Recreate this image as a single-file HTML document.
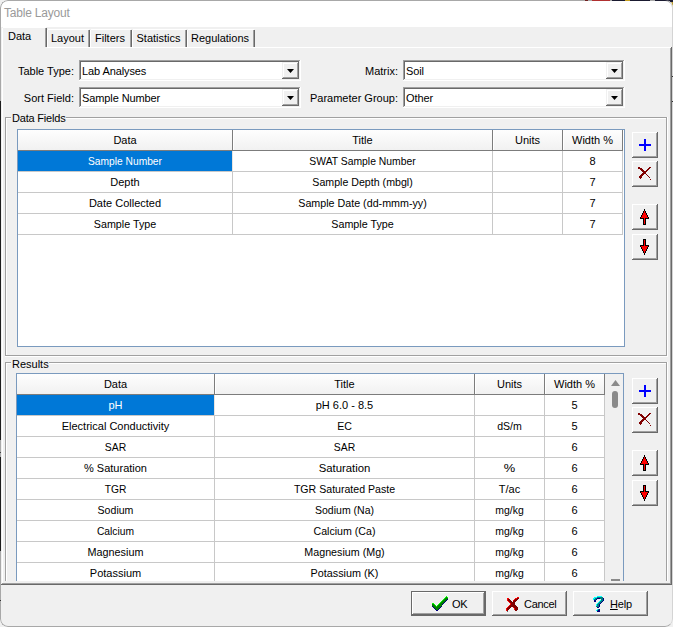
<!DOCTYPE html>
<html><head><meta charset="utf-8"><style>
html,body{margin:0;padding:0;}
body{width:673px;height:627px;overflow:hidden;position:relative;background:#f0f0f0;}
#w{position:absolute;left:0;top:0;width:673px;height:627px;border-radius:8px;background:#f0f0f0;overflow:hidden}
#bd{position:absolute;left:0;top:0;width:673px;height:627px;box-sizing:border-box;border:1px solid #a8a8a8;border-right-color:#d4d4d4;border-radius:8px}
#w div,#w span,#w svg{position:absolute;}
.t{font-family:"Liberation Sans",sans-serif;font-size:11px;line-height:13px;color:#000;white-space:nowrap}
</style></head><body><div style="position:absolute;left:645px;top:0;width:28px;height:14px;background:#1a1a30"></div><div style="position:absolute;left:668px;top:2px;width:5px;height:10px;background:#b89a30"></div><div id="w">
<div style="left:1px;top:1px;width:671px;height:26px;background:#ffffff"></div>
<span class="t" style="left:4px;top:7px;font-size:12px;color:#9a9a9a;letter-spacing:-0.2px">Table Layout</span>
<div style="left:47px;top:29px;width:43px;height:18px;background:#f0f0f0"></div>
<div style="left:48px;top:29px;width:41px;height:1px;background:#ffffff"></div>
<div style="left:47px;top:30px;width:1px;height:17px;background:#ffffff"></div>
<div style="left:89px;top:30px;width:1px;height:17px;background:#696969"></div>
<div style="left:88px;top:30px;width:1px;height:17px;background:#a0a0a0"></div>
<span class="t" style="left:47px;top:32px;width:41px;text-align:center;">Layout</span>
<div style="left:90px;top:29px;width:42px;height:18px;background:#f0f0f0"></div>
<div style="left:91px;top:29px;width:40px;height:1px;background:#ffffff"></div>
<div style="left:90px;top:30px;width:1px;height:17px;background:#ffffff"></div>
<div style="left:131px;top:30px;width:1px;height:17px;background:#696969"></div>
<div style="left:130px;top:30px;width:1px;height:17px;background:#a0a0a0"></div>
<span class="t" style="left:90px;top:32px;width:40px;text-align:center;">Filters</span>
<div style="left:132px;top:29px;width:55px;height:18px;background:#f0f0f0"></div>
<div style="left:133px;top:29px;width:53px;height:1px;background:#ffffff"></div>
<div style="left:132px;top:30px;width:1px;height:17px;background:#ffffff"></div>
<div style="left:186px;top:30px;width:1px;height:17px;background:#696969"></div>
<div style="left:185px;top:30px;width:1px;height:17px;background:#a0a0a0"></div>
<span class="t" style="left:132px;top:32px;width:53px;text-align:center;">Statistics</span>
<div style="left:187px;top:29px;width:68px;height:18px;background:#f0f0f0"></div>
<div style="left:188px;top:29px;width:66px;height:1px;background:#ffffff"></div>
<div style="left:187px;top:30px;width:1px;height:17px;background:#ffffff"></div>
<div style="left:254px;top:30px;width:1px;height:17px;background:#696969"></div>
<div style="left:253px;top:30px;width:1px;height:17px;background:#a0a0a0"></div>
<span class="t" style="left:187px;top:32px;width:66px;text-align:center;">Regulations</span>
<div style="left:2px;top:47px;width:669px;height:1px;background:#ffffff"></div>
<div style="left:2px;top:47px;width:1px;height:537px;background:#ffffff"></div>
<div style="left:671px;top:47px;width:1px;height:538px;background:#696969"></div>
<div style="left:670px;top:48px;width:1px;height:536px;background:#a0a0a0"></div>
<div style="left:2px;top:584px;width:670px;height:1px;background:#696969"></div>
<div style="left:3px;top:583px;width:668px;height:1px;background:#a0a0a0"></div>
<div style="left:2px;top:27px;width:45px;height:21px;background:#f0f0f0"></div>
<div style="left:3px;top:27px;width:43px;height:1px;background:#ffffff"></div>
<div style="left:2px;top:28px;width:1px;height:20px;background:#ffffff"></div>
<div style="left:46px;top:28px;width:1px;height:19px;background:#696969"></div>
<div style="left:45px;top:28px;width:1px;height:19px;background:#a0a0a0"></div>
<span class="t" style="left:8px;top:30px;">Data</span>
<div style="left:79px;top:60px;width:222px;height:21px;background:#fff"></div>
<div style="left:79px;top:60px;width:222px;height:1px;background:#a0a0a0"></div>
<div style="left:79px;top:60px;width:1px;height:21px;background:#a0a0a0"></div>
<div style="left:80px;top:61px;width:220px;height:1px;background:#696969"></div>
<div style="left:80px;top:61px;width:1px;height:19px;background:#696969"></div>
<div style="left:79px;top:80px;width:222px;height:1px;background:#ffffff"></div>
<div style="left:300px;top:60px;width:1px;height:21px;background:#ffffff"></div>
<div style="left:80px;top:79px;width:220px;height:1px;background:#f0f0f0"></div>
<div style="left:299px;top:61px;width:1px;height:19px;background:#f0f0f0"></div>
<div style="left:282px;top:62px;width:17px;height:17px;background:#f0f0f0"></div>
<div style="left:282px;top:62px;width:17px;height:1px;background:#f0f0f0"></div>
<div style="left:282px;top:62px;width:1px;height:17px;background:#f0f0f0"></div>
<div style="left:283px;top:63px;width:15px;height:1px;background:#ffffff"></div>
<div style="left:283px;top:63px;width:1px;height:15px;background:#ffffff"></div>
<div style="left:282px;top:78px;width:17px;height:1px;background:#696969"></div>
<div style="left:298px;top:62px;width:1px;height:17px;background:#696969"></div>
<div style="left:283px;top:77px;width:15px;height:1px;background:#a0a0a0"></div>
<div style="left:297px;top:63px;width:1px;height:15px;background:#a0a0a0"></div>
<svg style="left:287px;top:69px" width="7" height="4"><path d="M0 0H7L3.5 4Z" fill="#000"/></svg>
<span class="t" style="left:82px;top:65px;letter-spacing:-0.1px">Lab Analyses</span>
<div style="left:79px;top:87px;width:222px;height:21px;background:#fff"></div>
<div style="left:79px;top:87px;width:222px;height:1px;background:#a0a0a0"></div>
<div style="left:79px;top:87px;width:1px;height:21px;background:#a0a0a0"></div>
<div style="left:80px;top:88px;width:220px;height:1px;background:#696969"></div>
<div style="left:80px;top:88px;width:1px;height:19px;background:#696969"></div>
<div style="left:79px;top:107px;width:222px;height:1px;background:#ffffff"></div>
<div style="left:300px;top:87px;width:1px;height:21px;background:#ffffff"></div>
<div style="left:80px;top:106px;width:220px;height:1px;background:#f0f0f0"></div>
<div style="left:299px;top:88px;width:1px;height:19px;background:#f0f0f0"></div>
<div style="left:282px;top:89px;width:17px;height:17px;background:#f0f0f0"></div>
<div style="left:282px;top:89px;width:17px;height:1px;background:#f0f0f0"></div>
<div style="left:282px;top:89px;width:1px;height:17px;background:#f0f0f0"></div>
<div style="left:283px;top:90px;width:15px;height:1px;background:#ffffff"></div>
<div style="left:283px;top:90px;width:1px;height:15px;background:#ffffff"></div>
<div style="left:282px;top:105px;width:17px;height:1px;background:#696969"></div>
<div style="left:298px;top:89px;width:1px;height:17px;background:#696969"></div>
<div style="left:283px;top:104px;width:15px;height:1px;background:#a0a0a0"></div>
<div style="left:297px;top:90px;width:1px;height:15px;background:#a0a0a0"></div>
<svg style="left:287px;top:96px" width="7" height="4"><path d="M0 0H7L3.5 4Z" fill="#000"/></svg>
<span class="t" style="left:82px;top:92px;letter-spacing:-0.1px">Sample Number</span>
<div style="left:403px;top:60px;width:222px;height:21px;background:#fff"></div>
<div style="left:403px;top:60px;width:222px;height:1px;background:#a0a0a0"></div>
<div style="left:403px;top:60px;width:1px;height:21px;background:#a0a0a0"></div>
<div style="left:404px;top:61px;width:220px;height:1px;background:#696969"></div>
<div style="left:404px;top:61px;width:1px;height:19px;background:#696969"></div>
<div style="left:403px;top:80px;width:222px;height:1px;background:#ffffff"></div>
<div style="left:624px;top:60px;width:1px;height:21px;background:#ffffff"></div>
<div style="left:404px;top:79px;width:220px;height:1px;background:#f0f0f0"></div>
<div style="left:623px;top:61px;width:1px;height:19px;background:#f0f0f0"></div>
<div style="left:606px;top:62px;width:17px;height:17px;background:#f0f0f0"></div>
<div style="left:606px;top:62px;width:17px;height:1px;background:#f0f0f0"></div>
<div style="left:606px;top:62px;width:1px;height:17px;background:#f0f0f0"></div>
<div style="left:607px;top:63px;width:15px;height:1px;background:#ffffff"></div>
<div style="left:607px;top:63px;width:1px;height:15px;background:#ffffff"></div>
<div style="left:606px;top:78px;width:17px;height:1px;background:#696969"></div>
<div style="left:622px;top:62px;width:1px;height:17px;background:#696969"></div>
<div style="left:607px;top:77px;width:15px;height:1px;background:#a0a0a0"></div>
<div style="left:621px;top:63px;width:1px;height:15px;background:#a0a0a0"></div>
<svg style="left:611px;top:69px" width="7" height="4"><path d="M0 0H7L3.5 4Z" fill="#000"/></svg>
<span class="t" style="left:406px;top:65px;letter-spacing:-0.1px">Soil</span>
<div style="left:403px;top:87px;width:222px;height:21px;background:#fff"></div>
<div style="left:403px;top:87px;width:222px;height:1px;background:#a0a0a0"></div>
<div style="left:403px;top:87px;width:1px;height:21px;background:#a0a0a0"></div>
<div style="left:404px;top:88px;width:220px;height:1px;background:#696969"></div>
<div style="left:404px;top:88px;width:1px;height:19px;background:#696969"></div>
<div style="left:403px;top:107px;width:222px;height:1px;background:#ffffff"></div>
<div style="left:624px;top:87px;width:1px;height:21px;background:#ffffff"></div>
<div style="left:404px;top:106px;width:220px;height:1px;background:#f0f0f0"></div>
<div style="left:623px;top:88px;width:1px;height:19px;background:#f0f0f0"></div>
<div style="left:606px;top:89px;width:17px;height:17px;background:#f0f0f0"></div>
<div style="left:606px;top:89px;width:17px;height:1px;background:#f0f0f0"></div>
<div style="left:606px;top:89px;width:1px;height:17px;background:#f0f0f0"></div>
<div style="left:607px;top:90px;width:15px;height:1px;background:#ffffff"></div>
<div style="left:607px;top:90px;width:1px;height:15px;background:#ffffff"></div>
<div style="left:606px;top:105px;width:17px;height:1px;background:#696969"></div>
<div style="left:622px;top:89px;width:1px;height:17px;background:#696969"></div>
<div style="left:607px;top:104px;width:15px;height:1px;background:#a0a0a0"></div>
<div style="left:621px;top:90px;width:1px;height:15px;background:#a0a0a0"></div>
<svg style="left:611px;top:96px" width="7" height="4"><path d="M0 0H7L3.5 4Z" fill="#000"/></svg>
<span class="t" style="left:406px;top:92px;letter-spacing:-0.1px">Other</span>
<span class="t" style="left:0;top:65px;width:74px;text-align:right">Table Type:</span>
<span class="t" style="left:0;top:92px;width:74px;text-align:right">Sort Field:</span>
<span class="t" style="left:300px;top:65px;width:98px;text-align:right">Matrix:</span>
<span class="t" style="left:300px;top:92px;width:98px;text-align:right">Parameter Group:</span>
<div style="left:5px;top:117px;width:662px;height:1px;background:#a0a0a0"></div>
<div style="left:6px;top:118px;width:660px;height:1px;background:#ffffff"></div>
<div style="left:5px;top:117px;width:1px;height:239px;background:#a0a0a0"></div>
<div style="left:6px;top:118px;width:1px;height:237px;background:#ffffff"></div>
<div style="left:666px;top:117px;width:1px;height:239px;background:#a0a0a0"></div>
<div style="left:667px;top:117px;width:1px;height:240px;background:#ffffff"></div>
<div style="left:5px;top:355px;width:662px;height:1px;background:#a0a0a0"></div>
<div style="left:5px;top:356px;width:663px;height:1px;background:#ffffff"></div>
<div style="left:11px;top:112px;width:55px;height:13px;background:#f0f0f0"></div>
<span class="t" style="left:12px;top:112px;letter-spacing:-0.2px">Data Fields</span>
<div style="left:17px;top:129px;width:608px;height:218px;background:#ffffff"></div>
<div style="left:18px;top:130px;width:605px;height:20px;background:linear-gradient(#fefefe,#f1f1f1)"></div>
<div style="left:18px;top:150px;width:605px;height:1px;background:#7c7c7c"></div>
<div style="left:232px;top:130px;width:1px;height:20px;background:#7c7c7c"></div>
<div style="left:233px;top:130px;width:1px;height:20px;background:#ffffff"></div>
<span class="t" style="left:18px;top:134px;width:214px;text-align:center;">Data</span>
<div style="left:492px;top:130px;width:1px;height:20px;background:#7c7c7c"></div>
<div style="left:493px;top:130px;width:1px;height:20px;background:#ffffff"></div>
<span class="t" style="left:233px;top:134px;width:259px;text-align:center;">Title</span>
<div style="left:562px;top:130px;width:1px;height:20px;background:#7c7c7c"></div>
<div style="left:563px;top:130px;width:1px;height:20px;background:#ffffff"></div>
<span class="t" style="left:493px;top:134px;width:69px;text-align:center;">Units</span>
<div style="left:622px;top:130px;width:1px;height:20px;background:#7c7c7c"></div>
<span class="t" style="left:563px;top:134px;width:59px;text-align:center;">Width %</span>
<div style="left:18px;top:151px;width:214px;height:20px;background:#0078d7"></div>
<span class="t" style="left:18px;top:155px;width:214px;text-align:center;color:#fff;transform:scaleX(0.930);">Sample Number</span>
<div style="left:232px;top:151px;width:1px;height:20px;background:#e8e4e0"></div>
<span class="t" style="left:233px;top:155px;width:259px;text-align:center;;transform:scaleX(0.942);">SWAT Sample Number</span>
<div style="left:492px;top:151px;width:1px;height:20px;background:#c8c8c8"></div>
<span class="t" style="left:493px;top:155px;width:69px;text-align:center;"></span>
<div style="left:562px;top:151px;width:1px;height:20px;background:#c8c8c8"></div>
<span class="t" style="left:563px;top:155px;width:59px;text-align:center;">8</span>
<div style="left:622px;top:151px;width:1px;height:20px;background:#c8c8c8"></div>
<div style="left:18px;top:171px;width:605px;height:1px;background:#c8c8c8"></div>
<span class="t" style="left:18px;top:176px;width:214px;text-align:center;">Depth</span>
<div style="left:232px;top:172px;width:1px;height:20px;background:#c8c8c8"></div>
<span class="t" style="left:233px;top:176px;width:259px;text-align:center;;transform:scaleX(0.966);">Sample Depth (mbgl)</span>
<div style="left:492px;top:172px;width:1px;height:20px;background:#c8c8c8"></div>
<span class="t" style="left:493px;top:176px;width:69px;text-align:center;"></span>
<div style="left:562px;top:172px;width:1px;height:20px;background:#c8c8c8"></div>
<span class="t" style="left:563px;top:176px;width:59px;text-align:center;">7</span>
<div style="left:622px;top:172px;width:1px;height:20px;background:#c8c8c8"></div>
<div style="left:18px;top:192px;width:605px;height:1px;background:#c8c8c8"></div>
<span class="t" style="left:18px;top:197px;width:214px;text-align:center;">Date Collected</span>
<div style="left:232px;top:193px;width:1px;height:20px;background:#c8c8c8"></div>
<span class="t" style="left:233px;top:197px;width:259px;text-align:center;;transform:scaleX(0.973);">Sample Date (dd-mmm-yy)</span>
<div style="left:492px;top:193px;width:1px;height:20px;background:#c8c8c8"></div>
<span class="t" style="left:493px;top:197px;width:69px;text-align:center;"></span>
<div style="left:562px;top:193px;width:1px;height:20px;background:#c8c8c8"></div>
<span class="t" style="left:563px;top:197px;width:59px;text-align:center;">7</span>
<div style="left:622px;top:193px;width:1px;height:20px;background:#c8c8c8"></div>
<div style="left:18px;top:213px;width:605px;height:1px;background:#c8c8c8"></div>
<span class="t" style="left:18px;top:218px;width:214px;text-align:center;;transform:scaleX(0.976);">Sample Type</span>
<div style="left:232px;top:214px;width:1px;height:20px;background:#c8c8c8"></div>
<span class="t" style="left:233px;top:218px;width:259px;text-align:center;;transform:scaleX(0.976);">Sample Type</span>
<div style="left:492px;top:214px;width:1px;height:20px;background:#c8c8c8"></div>
<span class="t" style="left:493px;top:218px;width:69px;text-align:center;"></span>
<div style="left:562px;top:214px;width:1px;height:20px;background:#c8c8c8"></div>
<span class="t" style="left:563px;top:218px;width:59px;text-align:center;">7</span>
<div style="left:622px;top:214px;width:1px;height:20px;background:#c8c8c8"></div>
<div style="left:18px;top:234px;width:605px;height:1px;background:#c8c8c8"></div>
<div style="left:17px;top:129px;width:608px;height:1px;background:#7a9abe"></div>
<div style="left:17px;top:129px;width:1px;height:218px;background:#7a9abe"></div>
<div style="left:624px;top:129px;width:1px;height:218px;background:#7a9abe"></div>
<div style="left:17px;top:346px;width:608px;height:1px;background:#7a9abe"></div>
<div style="left:5px;top:362px;width:662px;height:1px;background:#a0a0a0"></div>
<div style="left:6px;top:363px;width:660px;height:1px;background:#ffffff"></div>
<div style="left:5px;top:362px;width:1px;height:228px;background:#a0a0a0"></div>
<div style="left:6px;top:363px;width:1px;height:226px;background:#ffffff"></div>
<div style="left:666px;top:362px;width:1px;height:228px;background:#a0a0a0"></div>
<div style="left:667px;top:362px;width:1px;height:229px;background:#ffffff"></div>
<div style="left:5px;top:589px;width:662px;height:1px;background:#a0a0a0"></div>
<div style="left:5px;top:590px;width:663px;height:1px;background:#ffffff"></div>
<div style="left:11px;top:357px;width:38px;height:13px;background:#f0f0f0"></div>
<span class="t" style="left:12px;top:358px;">Results</span>
<div style="left:16px;top:373px;width:608px;height:228px;background:#ffffff"></div>
<div style="left:17px;top:374px;width:588px;height:20px;background:linear-gradient(#fefefe,#f1f1f1)"></div>
<div style="left:17px;top:394px;width:588px;height:1px;background:#7c7c7c"></div>
<div style="left:214px;top:374px;width:1px;height:20px;background:#7c7c7c"></div>
<div style="left:215px;top:374px;width:1px;height:20px;background:#ffffff"></div>
<span class="t" style="left:17px;top:378px;width:197px;text-align:center;">Data</span>
<div style="left:474px;top:374px;width:1px;height:20px;background:#7c7c7c"></div>
<div style="left:475px;top:374px;width:1px;height:20px;background:#ffffff"></div>
<span class="t" style="left:215px;top:378px;width:259px;text-align:center;">Title</span>
<div style="left:544px;top:374px;width:1px;height:20px;background:#7c7c7c"></div>
<div style="left:545px;top:374px;width:1px;height:20px;background:#ffffff"></div>
<span class="t" style="left:475px;top:378px;width:69px;text-align:center;">Units</span>
<div style="left:604px;top:374px;width:1px;height:20px;background:#7c7c7c"></div>
<span class="t" style="left:545px;top:378px;width:59px;text-align:center;">Width %</span>
<div style="left:17px;top:395px;width:197px;height:20px;background:#0078d7"></div>
<span class="t" style="left:17px;top:399px;width:197px;text-align:center;color:#fff">pH</span>
<div style="left:214px;top:395px;width:1px;height:20px;background:#e8e4e0"></div>
<span class="t" style="left:215px;top:399px;width:259px;text-align:center;">pH 6.0 - 8.5</span>
<div style="left:474px;top:395px;width:1px;height:20px;background:#c8c8c8"></div>
<span class="t" style="left:475px;top:399px;width:69px;text-align:center;"></span>
<div style="left:544px;top:395px;width:1px;height:20px;background:#c8c8c8"></div>
<span class="t" style="left:545px;top:399px;width:59px;text-align:center;">5</span>
<div style="left:604px;top:395px;width:1px;height:20px;background:#c8c8c8"></div>
<div style="left:17px;top:415px;width:588px;height:1px;background:#c8c8c8"></div>
<span class="t" style="left:17px;top:420px;width:197px;text-align:center;">Electrical Conductivity</span>
<div style="left:214px;top:416px;width:1px;height:20px;background:#c8c8c8"></div>
<span class="t" style="left:215px;top:420px;width:259px;text-align:center;;transform:scaleX(0.964);">EC</span>
<div style="left:474px;top:416px;width:1px;height:20px;background:#c8c8c8"></div>
<span class="t" style="left:475px;top:420px;width:69px;text-align:center;;transform:scaleX(0.960);">dS/m</span>
<div style="left:544px;top:416px;width:1px;height:20px;background:#c8c8c8"></div>
<span class="t" style="left:545px;top:420px;width:59px;text-align:center;">5</span>
<div style="left:604px;top:416px;width:1px;height:20px;background:#c8c8c8"></div>
<div style="left:17px;top:436px;width:588px;height:1px;background:#c8c8c8"></div>
<span class="t" style="left:17px;top:441px;width:197px;text-align:center;;transform:scaleX(0.943);">SAR</span>
<div style="left:214px;top:437px;width:1px;height:20px;background:#c8c8c8"></div>
<span class="t" style="left:215px;top:441px;width:259px;text-align:center;;transform:scaleX(0.943);">SAR</span>
<div style="left:474px;top:437px;width:1px;height:20px;background:#c8c8c8"></div>
<span class="t" style="left:475px;top:441px;width:69px;text-align:center;"></span>
<div style="left:544px;top:437px;width:1px;height:20px;background:#c8c8c8"></div>
<span class="t" style="left:545px;top:441px;width:59px;text-align:center;">6</span>
<div style="left:604px;top:437px;width:1px;height:20px;background:#c8c8c8"></div>
<div style="left:17px;top:457px;width:588px;height:1px;background:#c8c8c8"></div>
<span class="t" style="left:17px;top:462px;width:197px;text-align:center;">% Saturation</span>
<div style="left:214px;top:458px;width:1px;height:20px;background:#c8c8c8"></div>
<span class="t" style="left:215px;top:462px;width:259px;text-align:center;;transform:scaleX(1.031);">Saturation</span>
<div style="left:474px;top:458px;width:1px;height:20px;background:#c8c8c8"></div>
<span class="t" style="left:475px;top:462px;width:69px;text-align:center;;transform:scaleX(1.167);">%</span>
<div style="left:544px;top:458px;width:1px;height:20px;background:#c8c8c8"></div>
<span class="t" style="left:545px;top:462px;width:59px;text-align:center;">6</span>
<div style="left:604px;top:458px;width:1px;height:20px;background:#c8c8c8"></div>
<div style="left:17px;top:478px;width:588px;height:1px;background:#c8c8c8"></div>
<span class="t" style="left:17px;top:483px;width:197px;text-align:center;;transform:scaleX(0.932);">TGR</span>
<div style="left:214px;top:479px;width:1px;height:20px;background:#c8c8c8"></div>
<span class="t" style="left:215px;top:483px;width:259px;text-align:center;;transform:scaleX(0.962);">TGR Saturated Paste</span>
<div style="left:474px;top:479px;width:1px;height:20px;background:#c8c8c8"></div>
<span class="t" style="left:475px;top:483px;width:69px;text-align:center;">T/ac</span>
<div style="left:544px;top:479px;width:1px;height:20px;background:#c8c8c8"></div>
<span class="t" style="left:545px;top:483px;width:59px;text-align:center;">6</span>
<div style="left:604px;top:479px;width:1px;height:20px;background:#c8c8c8"></div>
<div style="left:17px;top:499px;width:588px;height:1px;background:#c8c8c8"></div>
<span class="t" style="left:17px;top:504px;width:197px;text-align:center;;transform:scaleX(0.961);">Sodium</span>
<div style="left:214px;top:500px;width:1px;height:20px;background:#c8c8c8"></div>
<span class="t" style="left:215px;top:504px;width:259px;text-align:center;;transform:scaleX(0.956);">Sodium (Na)</span>
<div style="left:474px;top:500px;width:1px;height:20px;background:#c8c8c8"></div>
<span class="t" style="left:475px;top:504px;width:69px;text-align:center;;transform:scaleX(0.948);">mg/kg</span>
<div style="left:544px;top:500px;width:1px;height:20px;background:#c8c8c8"></div>
<span class="t" style="left:545px;top:504px;width:59px;text-align:center;">6</span>
<div style="left:604px;top:500px;width:1px;height:20px;background:#c8c8c8"></div>
<div style="left:17px;top:520px;width:588px;height:1px;background:#c8c8c8"></div>
<span class="t" style="left:17px;top:525px;width:197px;text-align:center;;transform:scaleX(0.933);">Calcium</span>
<div style="left:214px;top:521px;width:1px;height:20px;background:#c8c8c8"></div>
<span class="t" style="left:215px;top:525px;width:259px;text-align:center;;transform:scaleX(0.965);">Calcium (Ca)</span>
<div style="left:474px;top:521px;width:1px;height:20px;background:#c8c8c8"></div>
<span class="t" style="left:475px;top:525px;width:69px;text-align:center;;transform:scaleX(0.948);">mg/kg</span>
<div style="left:544px;top:521px;width:1px;height:20px;background:#c8c8c8"></div>
<span class="t" style="left:545px;top:525px;width:59px;text-align:center;">6</span>
<div style="left:604px;top:521px;width:1px;height:20px;background:#c8c8c8"></div>
<div style="left:17px;top:541px;width:588px;height:1px;background:#c8c8c8"></div>
<span class="t" style="left:17px;top:546px;width:197px;text-align:center;;transform:scaleX(0.982);">Magnesium</span>
<div style="left:214px;top:542px;width:1px;height:20px;background:#c8c8c8"></div>
<span class="t" style="left:215px;top:546px;width:259px;text-align:center;;transform:scaleX(0.974);">Magnesium (Mg)</span>
<div style="left:474px;top:542px;width:1px;height:20px;background:#c8c8c8"></div>
<span class="t" style="left:475px;top:546px;width:69px;text-align:center;;transform:scaleX(0.948);">mg/kg</span>
<div style="left:544px;top:542px;width:1px;height:20px;background:#c8c8c8"></div>
<span class="t" style="left:545px;top:546px;width:59px;text-align:center;">6</span>
<div style="left:604px;top:542px;width:1px;height:20px;background:#c8c8c8"></div>
<div style="left:17px;top:562px;width:588px;height:1px;background:#c8c8c8"></div>
<span class="t" style="left:17px;top:567px;width:197px;text-align:center;">Potassium</span>
<div style="left:214px;top:563px;width:1px;height:20px;background:#c8c8c8"></div>
<span class="t" style="left:215px;top:567px;width:259px;text-align:center;;transform:scaleX(0.981);">Potassium (K)</span>
<div style="left:474px;top:563px;width:1px;height:20px;background:#c8c8c8"></div>
<span class="t" style="left:475px;top:567px;width:69px;text-align:center;;transform:scaleX(0.948);">mg/kg</span>
<div style="left:544px;top:563px;width:1px;height:20px;background:#c8c8c8"></div>
<span class="t" style="left:545px;top:567px;width:59px;text-align:center;">6</span>
<div style="left:604px;top:563px;width:1px;height:20px;background:#c8c8c8"></div>
<div style="left:17px;top:583px;width:588px;height:1px;background:#c8c8c8"></div>
<div style="left:16px;top:373px;width:608px;height:1px;background:#7a9abe"></div>
<div style="left:16px;top:373px;width:1px;height:228px;background:#7a9abe"></div>
<div style="left:623px;top:373px;width:1px;height:228px;background:#7a9abe"></div>
<div style="left:16px;top:600px;width:608px;height:1px;background:#7a9abe"></div>
<div style="left:605px;top:374px;width:18px;height:227px;background:#f0f0f0"></div>
<svg style="left:611px;top:380px" width="9" height="6"><path d="M4.5 0L9 6H0Z" fill="#8a8a8a"/></svg>
<div style="left:612px;top:391px;width:6px;height:17px;background:#8a8a8a;border-radius:3px"></div>
<div style="left:611px;top:579px;width:9px;height:2px;background:#8a8a8a"></div>
<div style="left:3px;top:581px;width:667px;height:2px;background:#f0f0f0"></div>
<div style="left:2px;top:583px;width:669px;height:1px;background:#a0a0a0"></div>
<div style="left:1px;top:584px;width:671px;height:1px;background:#696969"></div>
<div style="left:1px;top:585px;width:671px;height:41px;background:#f0f0f0"></div>
<div style="left:632px;top:132px;width:26px;height:26px;background:#f0f0f0"></div>
<div style="left:632px;top:132px;width:26px;height:1px;background:#ffffff"></div>
<div style="left:632px;top:132px;width:1px;height:26px;background:#ffffff"></div>
<div style="left:633px;top:133px;width:24px;height:1px;background:#f0f0f0"></div>
<div style="left:633px;top:133px;width:1px;height:24px;background:#f0f0f0"></div>
<div style="left:632px;top:157px;width:26px;height:1px;background:#696969"></div>
<div style="left:657px;top:132px;width:1px;height:26px;background:#696969"></div>
<div style="left:633px;top:156px;width:24px;height:1px;background:#a0a0a0"></div>
<div style="left:656px;top:133px;width:1px;height:24px;background:#a0a0a0"></div>
<div style="left:632px;top:161px;width:26px;height:26px;background:#f0f0f0"></div>
<div style="left:632px;top:161px;width:26px;height:1px;background:#ffffff"></div>
<div style="left:632px;top:161px;width:1px;height:26px;background:#ffffff"></div>
<div style="left:633px;top:162px;width:24px;height:1px;background:#f0f0f0"></div>
<div style="left:633px;top:162px;width:1px;height:24px;background:#f0f0f0"></div>
<div style="left:632px;top:186px;width:26px;height:1px;background:#696969"></div>
<div style="left:657px;top:161px;width:1px;height:26px;background:#696969"></div>
<div style="left:633px;top:185px;width:24px;height:1px;background:#a0a0a0"></div>
<div style="left:656px;top:162px;width:1px;height:24px;background:#a0a0a0"></div>
<div style="left:632px;top:204px;width:26px;height:26px;background:#f0f0f0"></div>
<div style="left:632px;top:204px;width:26px;height:1px;background:#ffffff"></div>
<div style="left:632px;top:204px;width:1px;height:26px;background:#ffffff"></div>
<div style="left:633px;top:205px;width:24px;height:1px;background:#f0f0f0"></div>
<div style="left:633px;top:205px;width:1px;height:24px;background:#f0f0f0"></div>
<div style="left:632px;top:229px;width:26px;height:1px;background:#696969"></div>
<div style="left:657px;top:204px;width:1px;height:26px;background:#696969"></div>
<div style="left:633px;top:228px;width:24px;height:1px;background:#a0a0a0"></div>
<div style="left:656px;top:205px;width:1px;height:24px;background:#a0a0a0"></div>
<div style="left:632px;top:234px;width:26px;height:26px;background:#f0f0f0"></div>
<div style="left:632px;top:234px;width:26px;height:1px;background:#ffffff"></div>
<div style="left:632px;top:234px;width:1px;height:26px;background:#ffffff"></div>
<div style="left:633px;top:235px;width:24px;height:1px;background:#f0f0f0"></div>
<div style="left:633px;top:235px;width:1px;height:24px;background:#f0f0f0"></div>
<div style="left:632px;top:259px;width:26px;height:1px;background:#696969"></div>
<div style="left:657px;top:234px;width:1px;height:26px;background:#696969"></div>
<div style="left:633px;top:258px;width:24px;height:1px;background:#a0a0a0"></div>
<div style="left:656px;top:235px;width:1px;height:24px;background:#a0a0a0"></div>
<div style="left:632px;top:378px;width:26px;height:26px;background:#f0f0f0"></div>
<div style="left:632px;top:378px;width:26px;height:1px;background:#ffffff"></div>
<div style="left:632px;top:378px;width:1px;height:26px;background:#ffffff"></div>
<div style="left:633px;top:379px;width:24px;height:1px;background:#f0f0f0"></div>
<div style="left:633px;top:379px;width:1px;height:24px;background:#f0f0f0"></div>
<div style="left:632px;top:403px;width:26px;height:1px;background:#696969"></div>
<div style="left:657px;top:378px;width:1px;height:26px;background:#696969"></div>
<div style="left:633px;top:402px;width:24px;height:1px;background:#a0a0a0"></div>
<div style="left:656px;top:379px;width:1px;height:24px;background:#a0a0a0"></div>
<div style="left:632px;top:407px;width:26px;height:26px;background:#f0f0f0"></div>
<div style="left:632px;top:407px;width:26px;height:1px;background:#ffffff"></div>
<div style="left:632px;top:407px;width:1px;height:26px;background:#ffffff"></div>
<div style="left:633px;top:408px;width:24px;height:1px;background:#f0f0f0"></div>
<div style="left:633px;top:408px;width:1px;height:24px;background:#f0f0f0"></div>
<div style="left:632px;top:432px;width:26px;height:1px;background:#696969"></div>
<div style="left:657px;top:407px;width:1px;height:26px;background:#696969"></div>
<div style="left:633px;top:431px;width:24px;height:1px;background:#a0a0a0"></div>
<div style="left:656px;top:408px;width:1px;height:24px;background:#a0a0a0"></div>
<div style="left:632px;top:450px;width:26px;height:26px;background:#f0f0f0"></div>
<div style="left:632px;top:450px;width:26px;height:1px;background:#ffffff"></div>
<div style="left:632px;top:450px;width:1px;height:26px;background:#ffffff"></div>
<div style="left:633px;top:451px;width:24px;height:1px;background:#f0f0f0"></div>
<div style="left:633px;top:451px;width:1px;height:24px;background:#f0f0f0"></div>
<div style="left:632px;top:475px;width:26px;height:1px;background:#696969"></div>
<div style="left:657px;top:450px;width:1px;height:26px;background:#696969"></div>
<div style="left:633px;top:474px;width:24px;height:1px;background:#a0a0a0"></div>
<div style="left:656px;top:451px;width:1px;height:24px;background:#a0a0a0"></div>
<div style="left:632px;top:480px;width:26px;height:26px;background:#f0f0f0"></div>
<div style="left:632px;top:480px;width:26px;height:1px;background:#ffffff"></div>
<div style="left:632px;top:480px;width:1px;height:26px;background:#ffffff"></div>
<div style="left:633px;top:481px;width:24px;height:1px;background:#f0f0f0"></div>
<div style="left:633px;top:481px;width:1px;height:24px;background:#f0f0f0"></div>
<div style="left:632px;top:505px;width:26px;height:1px;background:#696969"></div>
<div style="left:657px;top:480px;width:1px;height:26px;background:#696969"></div>
<div style="left:633px;top:504px;width:24px;height:1px;background:#a0a0a0"></div>
<div style="left:656px;top:481px;width:1px;height:24px;background:#a0a0a0"></div>
<svg style="left:639px;top:139px" width="12" height="12" shape-rendering="crispEdges"><rect x="5" y="0" width="2" height="1" fill="#0000ff"/><rect x="5" y="1" width="2" height="1" fill="#0000ff"/><rect x="5" y="2" width="2" height="1" fill="#0000ff"/><rect x="5" y="3" width="2" height="1" fill="#0000ff"/><rect x="5" y="4" width="2" height="1" fill="#0000ff"/><rect x="0" y="5" width="12" height="1" fill="#0000ff"/><rect x="0" y="6" width="12" height="1" fill="#0000ff"/><rect x="5" y="7" width="2" height="1" fill="#0000ff"/><rect x="5" y="8" width="2" height="1" fill="#0000ff"/><rect x="5" y="9" width="2" height="1" fill="#0000ff"/><rect x="5" y="10" width="2" height="1" fill="#0000ff"/><rect x="5" y="11" width="2" height="1" fill="#0000ff"/></svg>
<svg style="left:638px;top:167px" width="14" height="13" shape-rendering="crispEdges"><rect x="0" y="0" width="2" height="1" fill="#800000"/><rect x="11" y="0" width="2" height="1" fill="#800000"/><rect x="0" y="1" width="4" height="1" fill="#800000"/><rect x="10" y="1" width="2" height="1" fill="#800000"/><rect x="2" y="2" width="3" height="1" fill="#800000"/><rect x="9" y="2" width="2" height="1" fill="#800000"/><rect x="3" y="3" width="3" height="1" fill="#800000"/><rect x="8" y="3" width="2" height="1" fill="#800000"/><rect x="4" y="4" width="5" height="1" fill="#800000"/><rect x="5" y="5" width="3" height="1" fill="#800000"/><rect x="4" y="6" width="4" height="1" fill="#800000"/><rect x="3" y="7" width="3" height="1" fill="#800000"/><rect x="8" y="7" width="1" height="1" fill="#800000"/><rect x="2" y="8" width="3" height="1" fill="#800000"/><rect x="9" y="8" width="1" height="1" fill="#800000"/><rect x="1" y="9" width="3" height="1" fill="#800000"/><rect x="10" y="9" width="1" height="1" fill="#800000"/><rect x="1" y="10" width="3" height="1" fill="#800000"/><rect x="11" y="10" width="1" height="1" fill="#800000"/><rect x="2" y="11" width="1" height="1" fill="#800000"/><rect x="12" y="12" width="1" height="1" fill="#800000"/></svg>
<svg style="left:640px;top:209px" width="9" height="16" shape-rendering="crispEdges"><rect x="4" y="0" width="1" height="1" fill="#000000"/><rect x="4" y="1" width="1" height="1" fill="#000000"/><rect x="3" y="2" width="1" height="1" fill="#000000"/><rect x="4" y="2" width="1" height="1" fill="#ff0000"/><rect x="5" y="2" width="1" height="1" fill="#000000"/><rect x="3" y="3" width="1" height="1" fill="#000000"/><rect x="4" y="3" width="1" height="1" fill="#ff0000"/><rect x="5" y="3" width="1" height="1" fill="#000000"/><rect x="2" y="4" width="1" height="1" fill="#000000"/><rect x="3" y="4" width="3" height="1" fill="#ff0000"/><rect x="6" y="4" width="1" height="1" fill="#000000"/><rect x="2" y="5" width="1" height="1" fill="#000000"/><rect x="3" y="5" width="3" height="1" fill="#ff0000"/><rect x="6" y="5" width="1" height="1" fill="#000000"/><rect x="1" y="6" width="1" height="1" fill="#000000"/><rect x="2" y="6" width="5" height="1" fill="#ff0000"/><rect x="7" y="6" width="1" height="1" fill="#000000"/><rect x="1" y="7" width="1" height="1" fill="#000000"/><rect x="2" y="7" width="5" height="1" fill="#ff0000"/><rect x="7" y="7" width="1" height="1" fill="#000000"/><rect x="0" y="8" width="1" height="1" fill="#000000"/><rect x="1" y="8" width="7" height="1" fill="#ff0000"/><rect x="8" y="8" width="1" height="1" fill="#000000"/><rect x="0" y="9" width="4" height="1" fill="#000000"/><rect x="4" y="9" width="1" height="1" fill="#ff0000"/><rect x="5" y="9" width="4" height="1" fill="#000000"/><rect x="3" y="10" width="1" height="1" fill="#000000"/><rect x="4" y="10" width="1" height="1" fill="#ff0000"/><rect x="5" y="10" width="1" height="1" fill="#000000"/><rect x="3" y="11" width="1" height="1" fill="#000000"/><rect x="4" y="11" width="1" height="1" fill="#ff0000"/><rect x="5" y="11" width="1" height="1" fill="#000000"/><rect x="3" y="12" width="1" height="1" fill="#000000"/><rect x="4" y="12" width="1" height="1" fill="#ff0000"/><rect x="5" y="12" width="1" height="1" fill="#000000"/><rect x="3" y="13" width="1" height="1" fill="#000000"/><rect x="4" y="13" width="1" height="1" fill="#ff0000"/><rect x="5" y="13" width="1" height="1" fill="#000000"/><rect x="3" y="14" width="1" height="1" fill="#000000"/><rect x="4" y="14" width="1" height="1" fill="#ff0000"/><rect x="5" y="14" width="1" height="1" fill="#000000"/><rect x="3" y="15" width="3" height="1" fill="#000000"/></svg>
<svg style="left:640px;top:239px" width="9" height="16" shape-rendering="crispEdges"><rect x="3" y="0" width="3" height="1" fill="#000000"/><rect x="3" y="1" width="1" height="1" fill="#000000"/><rect x="4" y="1" width="1" height="1" fill="#ff0000"/><rect x="5" y="1" width="1" height="1" fill="#000000"/><rect x="3" y="2" width="1" height="1" fill="#000000"/><rect x="4" y="2" width="1" height="1" fill="#ff0000"/><rect x="5" y="2" width="1" height="1" fill="#000000"/><rect x="3" y="3" width="1" height="1" fill="#000000"/><rect x="4" y="3" width="1" height="1" fill="#ff0000"/><rect x="5" y="3" width="1" height="1" fill="#000000"/><rect x="3" y="4" width="1" height="1" fill="#000000"/><rect x="4" y="4" width="1" height="1" fill="#ff0000"/><rect x="5" y="4" width="1" height="1" fill="#000000"/><rect x="3" y="5" width="1" height="1" fill="#000000"/><rect x="4" y="5" width="1" height="1" fill="#ff0000"/><rect x="5" y="5" width="1" height="1" fill="#000000"/><rect x="0" y="6" width="4" height="1" fill="#000000"/><rect x="4" y="6" width="1" height="1" fill="#ff0000"/><rect x="5" y="6" width="4" height="1" fill="#000000"/><rect x="0" y="7" width="1" height="1" fill="#000000"/><rect x="1" y="7" width="7" height="1" fill="#ff0000"/><rect x="8" y="7" width="1" height="1" fill="#000000"/><rect x="1" y="8" width="1" height="1" fill="#000000"/><rect x="2" y="8" width="5" height="1" fill="#ff0000"/><rect x="7" y="8" width="1" height="1" fill="#000000"/><rect x="1" y="9" width="1" height="1" fill="#000000"/><rect x="2" y="9" width="5" height="1" fill="#ff0000"/><rect x="7" y="9" width="1" height="1" fill="#000000"/><rect x="2" y="10" width="1" height="1" fill="#000000"/><rect x="3" y="10" width="3" height="1" fill="#ff0000"/><rect x="6" y="10" width="1" height="1" fill="#000000"/><rect x="2" y="11" width="1" height="1" fill="#000000"/><rect x="3" y="11" width="3" height="1" fill="#ff0000"/><rect x="6" y="11" width="1" height="1" fill="#000000"/><rect x="3" y="12" width="1" height="1" fill="#000000"/><rect x="4" y="12" width="1" height="1" fill="#ff0000"/><rect x="5" y="12" width="1" height="1" fill="#000000"/><rect x="3" y="13" width="1" height="1" fill="#000000"/><rect x="4" y="13" width="1" height="1" fill="#ff0000"/><rect x="5" y="13" width="1" height="1" fill="#000000"/><rect x="4" y="14" width="1" height="1" fill="#000000"/><rect x="4" y="15" width="1" height="1" fill="#000000"/></svg>
<svg style="left:639px;top:385px" width="12" height="12" shape-rendering="crispEdges"><rect x="5" y="0" width="2" height="1" fill="#0000ff"/><rect x="5" y="1" width="2" height="1" fill="#0000ff"/><rect x="5" y="2" width="2" height="1" fill="#0000ff"/><rect x="5" y="3" width="2" height="1" fill="#0000ff"/><rect x="5" y="4" width="2" height="1" fill="#0000ff"/><rect x="0" y="5" width="12" height="1" fill="#0000ff"/><rect x="0" y="6" width="12" height="1" fill="#0000ff"/><rect x="5" y="7" width="2" height="1" fill="#0000ff"/><rect x="5" y="8" width="2" height="1" fill="#0000ff"/><rect x="5" y="9" width="2" height="1" fill="#0000ff"/><rect x="5" y="10" width="2" height="1" fill="#0000ff"/><rect x="5" y="11" width="2" height="1" fill="#0000ff"/></svg>
<svg style="left:638px;top:413px" width="14" height="13" shape-rendering="crispEdges"><rect x="0" y="0" width="2" height="1" fill="#800000"/><rect x="11" y="0" width="2" height="1" fill="#800000"/><rect x="0" y="1" width="4" height="1" fill="#800000"/><rect x="10" y="1" width="2" height="1" fill="#800000"/><rect x="2" y="2" width="3" height="1" fill="#800000"/><rect x="9" y="2" width="2" height="1" fill="#800000"/><rect x="3" y="3" width="3" height="1" fill="#800000"/><rect x="8" y="3" width="2" height="1" fill="#800000"/><rect x="4" y="4" width="5" height="1" fill="#800000"/><rect x="5" y="5" width="3" height="1" fill="#800000"/><rect x="4" y="6" width="4" height="1" fill="#800000"/><rect x="3" y="7" width="3" height="1" fill="#800000"/><rect x="8" y="7" width="1" height="1" fill="#800000"/><rect x="2" y="8" width="3" height="1" fill="#800000"/><rect x="9" y="8" width="1" height="1" fill="#800000"/><rect x="1" y="9" width="3" height="1" fill="#800000"/><rect x="10" y="9" width="1" height="1" fill="#800000"/><rect x="1" y="10" width="3" height="1" fill="#800000"/><rect x="11" y="10" width="1" height="1" fill="#800000"/><rect x="2" y="11" width="1" height="1" fill="#800000"/><rect x="12" y="12" width="1" height="1" fill="#800000"/></svg>
<svg style="left:640px;top:455px" width="9" height="16" shape-rendering="crispEdges"><rect x="4" y="0" width="1" height="1" fill="#000000"/><rect x="4" y="1" width="1" height="1" fill="#000000"/><rect x="3" y="2" width="1" height="1" fill="#000000"/><rect x="4" y="2" width="1" height="1" fill="#ff0000"/><rect x="5" y="2" width="1" height="1" fill="#000000"/><rect x="3" y="3" width="1" height="1" fill="#000000"/><rect x="4" y="3" width="1" height="1" fill="#ff0000"/><rect x="5" y="3" width="1" height="1" fill="#000000"/><rect x="2" y="4" width="1" height="1" fill="#000000"/><rect x="3" y="4" width="3" height="1" fill="#ff0000"/><rect x="6" y="4" width="1" height="1" fill="#000000"/><rect x="2" y="5" width="1" height="1" fill="#000000"/><rect x="3" y="5" width="3" height="1" fill="#ff0000"/><rect x="6" y="5" width="1" height="1" fill="#000000"/><rect x="1" y="6" width="1" height="1" fill="#000000"/><rect x="2" y="6" width="5" height="1" fill="#ff0000"/><rect x="7" y="6" width="1" height="1" fill="#000000"/><rect x="1" y="7" width="1" height="1" fill="#000000"/><rect x="2" y="7" width="5" height="1" fill="#ff0000"/><rect x="7" y="7" width="1" height="1" fill="#000000"/><rect x="0" y="8" width="1" height="1" fill="#000000"/><rect x="1" y="8" width="7" height="1" fill="#ff0000"/><rect x="8" y="8" width="1" height="1" fill="#000000"/><rect x="0" y="9" width="4" height="1" fill="#000000"/><rect x="4" y="9" width="1" height="1" fill="#ff0000"/><rect x="5" y="9" width="4" height="1" fill="#000000"/><rect x="3" y="10" width="1" height="1" fill="#000000"/><rect x="4" y="10" width="1" height="1" fill="#ff0000"/><rect x="5" y="10" width="1" height="1" fill="#000000"/><rect x="3" y="11" width="1" height="1" fill="#000000"/><rect x="4" y="11" width="1" height="1" fill="#ff0000"/><rect x="5" y="11" width="1" height="1" fill="#000000"/><rect x="3" y="12" width="1" height="1" fill="#000000"/><rect x="4" y="12" width="1" height="1" fill="#ff0000"/><rect x="5" y="12" width="1" height="1" fill="#000000"/><rect x="3" y="13" width="1" height="1" fill="#000000"/><rect x="4" y="13" width="1" height="1" fill="#ff0000"/><rect x="5" y="13" width="1" height="1" fill="#000000"/><rect x="3" y="14" width="1" height="1" fill="#000000"/><rect x="4" y="14" width="1" height="1" fill="#ff0000"/><rect x="5" y="14" width="1" height="1" fill="#000000"/><rect x="3" y="15" width="3" height="1" fill="#000000"/></svg>
<svg style="left:640px;top:485px" width="9" height="16" shape-rendering="crispEdges"><rect x="3" y="0" width="3" height="1" fill="#000000"/><rect x="3" y="1" width="1" height="1" fill="#000000"/><rect x="4" y="1" width="1" height="1" fill="#ff0000"/><rect x="5" y="1" width="1" height="1" fill="#000000"/><rect x="3" y="2" width="1" height="1" fill="#000000"/><rect x="4" y="2" width="1" height="1" fill="#ff0000"/><rect x="5" y="2" width="1" height="1" fill="#000000"/><rect x="3" y="3" width="1" height="1" fill="#000000"/><rect x="4" y="3" width="1" height="1" fill="#ff0000"/><rect x="5" y="3" width="1" height="1" fill="#000000"/><rect x="3" y="4" width="1" height="1" fill="#000000"/><rect x="4" y="4" width="1" height="1" fill="#ff0000"/><rect x="5" y="4" width="1" height="1" fill="#000000"/><rect x="3" y="5" width="1" height="1" fill="#000000"/><rect x="4" y="5" width="1" height="1" fill="#ff0000"/><rect x="5" y="5" width="1" height="1" fill="#000000"/><rect x="0" y="6" width="4" height="1" fill="#000000"/><rect x="4" y="6" width="1" height="1" fill="#ff0000"/><rect x="5" y="6" width="4" height="1" fill="#000000"/><rect x="0" y="7" width="1" height="1" fill="#000000"/><rect x="1" y="7" width="7" height="1" fill="#ff0000"/><rect x="8" y="7" width="1" height="1" fill="#000000"/><rect x="1" y="8" width="1" height="1" fill="#000000"/><rect x="2" y="8" width="5" height="1" fill="#ff0000"/><rect x="7" y="8" width="1" height="1" fill="#000000"/><rect x="1" y="9" width="1" height="1" fill="#000000"/><rect x="2" y="9" width="5" height="1" fill="#ff0000"/><rect x="7" y="9" width="1" height="1" fill="#000000"/><rect x="2" y="10" width="1" height="1" fill="#000000"/><rect x="3" y="10" width="3" height="1" fill="#ff0000"/><rect x="6" y="10" width="1" height="1" fill="#000000"/><rect x="2" y="11" width="1" height="1" fill="#000000"/><rect x="3" y="11" width="3" height="1" fill="#ff0000"/><rect x="6" y="11" width="1" height="1" fill="#000000"/><rect x="3" y="12" width="1" height="1" fill="#000000"/><rect x="4" y="12" width="1" height="1" fill="#ff0000"/><rect x="5" y="12" width="1" height="1" fill="#000000"/><rect x="3" y="13" width="1" height="1" fill="#000000"/><rect x="4" y="13" width="1" height="1" fill="#ff0000"/><rect x="5" y="13" width="1" height="1" fill="#000000"/><rect x="4" y="14" width="1" height="1" fill="#000000"/><rect x="4" y="15" width="1" height="1" fill="#000000"/></svg>
<div style="left:411px;top:591px;width:75px;height:25px;background:#696969"></div>
<div style="left:412px;top:592px;width:73px;height:23px;background:#f0f0f0"></div>
<div style="left:412px;top:592px;width:73px;height:1px;background:#ffffff"></div>
<div style="left:412px;top:592px;width:1px;height:23px;background:#ffffff"></div>
<div style="left:413px;top:593px;width:71px;height:1px;background:#f0f0f0"></div>
<div style="left:413px;top:593px;width:1px;height:21px;background:#f0f0f0"></div>
<div style="left:412px;top:614px;width:73px;height:1px;background:#696969"></div>
<div style="left:484px;top:592px;width:1px;height:23px;background:#696969"></div>
<div style="left:413px;top:613px;width:71px;height:1px;background:#a0a0a0"></div>
<div style="left:483px;top:593px;width:1px;height:21px;background:#a0a0a0"></div>

<span class="t" style="left:452px;top:598px;letter-spacing:-0.3px">OK</span>
<svg style="left:432px;top:596px" width="16" height="15" shape-rendering="crispEdges"><rect x="14" y="0" width="1" height="1" fill="#00ff00"/><rect x="13" y="1" width="1" height="1" fill="#00ff00"/><rect x="14" y="1" width="1" height="1" fill="#008000"/><rect x="15" y="1" width="1" height="1" fill="#00ff00"/><rect x="12" y="2" width="1" height="1" fill="#00ff00"/><rect x="13" y="2" width="3" height="1" fill="#008000"/><rect x="11" y="3" width="1" height="1" fill="#00ff00"/><rect x="12" y="3" width="3" height="1" fill="#008000"/><rect x="15" y="3" width="1" height="1" fill="#000080"/><rect x="10" y="4" width="1" height="1" fill="#00ff00"/><rect x="11" y="4" width="3" height="1" fill="#008000"/><rect x="14" y="4" width="1" height="1" fill="#000080"/><rect x="9" y="5" width="1" height="1" fill="#00ff00"/><rect x="10" y="5" width="3" height="1" fill="#008000"/><rect x="13" y="5" width="1" height="1" fill="#000080"/><rect x="8" y="6" width="1" height="1" fill="#00ff00"/><rect x="9" y="6" width="3" height="1" fill="#008000"/><rect x="12" y="6" width="1" height="1" fill="#000080"/><rect x="0" y="7" width="2" height="1" fill="#00ff00"/><rect x="7" y="7" width="1" height="1" fill="#00ff00"/><rect x="8" y="7" width="3" height="1" fill="#008000"/><rect x="11" y="7" width="1" height="1" fill="#000080"/><rect x="0" y="8" width="2" height="1" fill="#008000"/><rect x="2" y="8" width="1" height="1" fill="#00ff00"/><rect x="6" y="8" width="1" height="1" fill="#00ff00"/><rect x="7" y="8" width="3" height="1" fill="#008000"/><rect x="10" y="8" width="1" height="1" fill="#000080"/><rect x="0" y="9" width="3" height="1" fill="#008000"/><rect x="3" y="9" width="1" height="1" fill="#00ff00"/><rect x="5" y="9" width="1" height="1" fill="#00ff00"/><rect x="6" y="9" width="4" height="1" fill="#008000"/><rect x="0" y="10" width="1" height="1" fill="#000080"/><rect x="1" y="10" width="3" height="1" fill="#008000"/><rect x="4" y="10" width="1" height="1" fill="#00ff00"/><rect x="5" y="10" width="4" height="1" fill="#008000"/><rect x="9" y="10" width="1" height="1" fill="#000080"/><rect x="1" y="11" width="1" height="1" fill="#000080"/><rect x="2" y="11" width="6" height="1" fill="#008000"/><rect x="8" y="11" width="1" height="1" fill="#000080"/><rect x="2" y="12" width="1" height="1" fill="#000080"/><rect x="3" y="12" width="4" height="1" fill="#008000"/><rect x="7" y="12" width="1" height="1" fill="#000080"/><rect x="3" y="13" width="1" height="1" fill="#000080"/><rect x="4" y="13" width="2" height="1" fill="#008000"/><rect x="6" y="13" width="1" height="1" fill="#000080"/><rect x="4" y="14" width="2" height="1" fill="#000080"/></svg>
<div style="left:492px;top:591px;width:75px;height:25px;background:#f0f0f0"></div>
<div style="left:492px;top:591px;width:75px;height:1px;background:#ffffff"></div>
<div style="left:492px;top:591px;width:1px;height:25px;background:#ffffff"></div>
<div style="left:493px;top:592px;width:73px;height:1px;background:#f0f0f0"></div>
<div style="left:493px;top:592px;width:1px;height:23px;background:#f0f0f0"></div>
<div style="left:492px;top:615px;width:75px;height:1px;background:#696969"></div>
<div style="left:566px;top:591px;width:1px;height:25px;background:#696969"></div>
<div style="left:493px;top:614px;width:73px;height:1px;background:#a0a0a0"></div>
<div style="left:565px;top:592px;width:1px;height:23px;background:#a0a0a0"></div>

<span class="t" style="left:524px;top:598px;letter-spacing:-0.3px">Cancel</span>
<svg style="left:506px;top:597px" width="13" height="15" shape-rendering="crispEdges"><rect x="11" y="0" width="2" height="1" fill="#ff0000"/><rect x="1" y="1" width="2" height="1" fill="#ff0000"/><rect x="9" y="1" width="2" height="1" fill="#ff0000"/><rect x="11" y="1" width="2" height="1" fill="#800000"/><rect x="1" y="2" width="1" height="1" fill="#ff0000"/><rect x="2" y="2" width="2" height="1" fill="#800000"/><rect x="8" y="2" width="1" height="1" fill="#ff0000"/><rect x="9" y="2" width="3" height="1" fill="#800000"/><rect x="1" y="3" width="1" height="1" fill="#ff0000"/><rect x="2" y="3" width="3" height="1" fill="#800000"/><rect x="7" y="3" width="1" height="1" fill="#ff0000"/><rect x="8" y="3" width="3" height="1" fill="#800000"/><rect x="2" y="4" width="1" height="1" fill="#ff0000"/><rect x="3" y="4" width="3" height="1" fill="#800000"/><rect x="7" y="4" width="3" height="1" fill="#800000"/><rect x="3" y="5" width="1" height="1" fill="#ff0000"/><rect x="4" y="5" width="5" height="1" fill="#800000"/><rect x="4" y="6" width="1" height="1" fill="#ff0000"/><rect x="5" y="6" width="4" height="1" fill="#800000"/><rect x="4" y="7" width="1" height="1" fill="#ff0000"/><rect x="5" y="7" width="4" height="1" fill="#800000"/><rect x="3" y="8" width="1" height="1" fill="#ff0000"/><rect x="4" y="8" width="6" height="1" fill="#800000"/><rect x="2" y="9" width="1" height="1" fill="#ff0000"/><rect x="3" y="9" width="8" height="1" fill="#800000"/><rect x="1" y="10" width="1" height="1" fill="#ff0000"/><rect x="2" y="10" width="3" height="1" fill="#800000"/><rect x="7" y="10" width="1" height="1" fill="#ff0000"/><rect x="8" y="10" width="4" height="1" fill="#800000"/><rect x="0" y="11" width="1" height="1" fill="#ff0000"/><rect x="1" y="11" width="3" height="1" fill="#800000"/><rect x="8" y="11" width="1" height="1" fill="#ff0000"/><rect x="9" y="11" width="3" height="1" fill="#800000"/><rect x="0" y="12" width="1" height="1" fill="#ff0000"/><rect x="1" y="12" width="2" height="1" fill="#800000"/><rect x="8" y="12" width="1" height="1" fill="#ff0000"/><rect x="9" y="12" width="3" height="1" fill="#800000"/><rect x="0" y="13" width="1" height="1" fill="#ff0000"/><rect x="1" y="13" width="1" height="1" fill="#800000"/><rect x="9" y="13" width="2" height="1" fill="#800000"/><rect x="1" y="14" width="1" height="1" fill="#606060"/></svg>
<div style="left:573px;top:591px;width:75px;height:25px;background:#f0f0f0"></div>
<div style="left:573px;top:591px;width:75px;height:1px;background:#ffffff"></div>
<div style="left:573px;top:591px;width:1px;height:25px;background:#ffffff"></div>
<div style="left:574px;top:592px;width:73px;height:1px;background:#f0f0f0"></div>
<div style="left:574px;top:592px;width:1px;height:23px;background:#f0f0f0"></div>
<div style="left:573px;top:615px;width:75px;height:1px;background:#696969"></div>
<div style="left:647px;top:591px;width:1px;height:25px;background:#696969"></div>
<div style="left:574px;top:614px;width:73px;height:1px;background:#a0a0a0"></div>
<div style="left:646px;top:592px;width:1px;height:23px;background:#a0a0a0"></div>

<span class="t" style="left:610px;top:598px;letter-spacing:-0.2px"><u>H</u>elp</span>
<svg style="left:593px;top:596px" width="11" height="16" shape-rendering="crispEdges"><rect x="4" y="0" width="5" height="1" fill="#00ffff"/><rect x="1" y="1" width="3" height="1" fill="#00ffff"/><rect x="4" y="1" width="6" height="1" fill="#008080"/><rect x="0" y="2" width="2" height="1" fill="#00ffff"/><rect x="2" y="2" width="2" height="1" fill="#008080"/><rect x="4" y="2" width="3" height="1" fill="#000080"/><rect x="7" y="2" width="3" height="1" fill="#008080"/><rect x="10" y="2" width="1" height="1" fill="#000080"/><rect x="0" y="3" width="1" height="1" fill="#00ffff"/><rect x="1" y="3" width="2" height="1" fill="#008080"/><rect x="3" y="3" width="1" height="1" fill="#000080"/><rect x="8" y="3" width="2" height="1" fill="#008080"/><rect x="10" y="3" width="1" height="1" fill="#000080"/><rect x="1" y="4" width="2" height="1" fill="#000080"/><rect x="7" y="4" width="1" height="1" fill="#00ffff"/><rect x="8" y="4" width="2" height="1" fill="#008080"/><rect x="10" y="4" width="1" height="1" fill="#000080"/><rect x="1" y="5" width="2" height="1" fill="#000080"/><rect x="6" y="5" width="1" height="1" fill="#00ffff"/><rect x="7" y="5" width="2" height="1" fill="#008080"/><rect x="9" y="5" width="1" height="1" fill="#000080"/><rect x="5" y="6" width="1" height="1" fill="#00ffff"/><rect x="6" y="6" width="2" height="1" fill="#008080"/><rect x="8" y="6" width="1" height="1" fill="#000080"/><rect x="4" y="7" width="1" height="1" fill="#00ffff"/><rect x="5" y="7" width="2" height="1" fill="#008080"/><rect x="7" y="7" width="1" height="1" fill="#000080"/><rect x="3" y="8" width="1" height="1" fill="#00ffff"/><rect x="4" y="8" width="2" height="1" fill="#008080"/><rect x="6" y="8" width="1" height="1" fill="#000080"/><rect x="3" y="9" width="1" height="1" fill="#00ffff"/><rect x="4" y="9" width="2" height="1" fill="#008080"/><rect x="6" y="9" width="1" height="1" fill="#000080"/><rect x="3" y="10" width="3" height="1" fill="#008080"/><rect x="6" y="10" width="1" height="1" fill="#000080"/><rect x="4" y="11" width="2" height="1" fill="#000080"/><rect x="4" y="13" width="1" height="1" fill="#00ffff"/><rect x="5" y="13" width="1" height="1" fill="#008080"/><rect x="6" y="13" width="1" height="1" fill="#000080"/><rect x="3" y="14" width="1" height="1" fill="#00ffff"/><rect x="4" y="14" width="1" height="1" fill="#008080"/><rect x="5" y="14" width="2" height="1" fill="#000080"/><rect x="4" y="15" width="3" height="1" fill="#000080"/></svg>
<div id="bd"></div>
<div style="left:0px;top:101px;width:1px;height:339px;background:#1e1e1e"></div>
<div style="left:0px;top:457px;width:1px;height:94px;background:#1e1e1e"></div>
<div style="left:0px;top:452px;width:1px;height:1px;background:#404040"></div>
<div style="left:0px;top:600px;width:1px;height:1px;background:#303030"></div>
<div style="left:672px;top:40px;width:1px;height:545px;background:#d4d4d4"></div>
<div style="left:672px;top:76px;width:1px;height:1px;background:#303030"></div>
<div style="left:672px;top:101px;width:1px;height:1px;background:#303030"></div>
<div style="left:585px;top:0px;width:3px;height:1px;background:#702020"></div>
<div style="left:592px;top:0px;width:18px;height:1px;background:#b03030"></div>
<div style="left:612px;top:0px;width:13px;height:1px;background:#1a1a30"></div>
<div style="left:625px;top:0px;width:5px;height:1px;background:#c8a020"></div>
<div style="left:630px;top:0px;width:20px;height:1px;background:#1a1a30"></div>
<div style="left:655px;top:0px;width:18px;height:1px;background:#1a1a30"></div></div></body></html>
